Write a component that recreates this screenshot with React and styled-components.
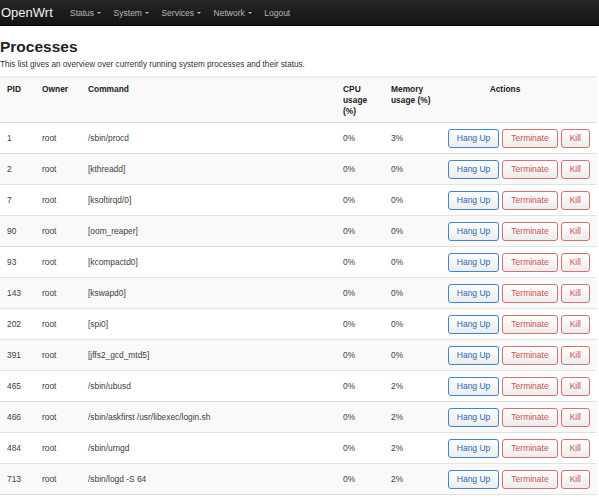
import React from 'react'
import styled, { createGlobalStyle } from 'styled-components'

const processes = [
  { pid: 1, owner: 'root', command: '/sbin/procd', cpu: '0%', mem: '3%' },
  { pid: 2, owner: 'root', command: '[kthreadd]', cpu: '0%', mem: '0%' },
  { pid: 7, owner: 'root', command: '[ksoftirqd/0]', cpu: '0%', mem: '0%' },
  { pid: 90, owner: 'root', command: '[oom_reaper]', cpu: '0%', mem: '0%' },
  { pid: 93, owner: 'root', command: '[kcompactd0]', cpu: '0%', mem: '0%' },
  { pid: 143, owner: 'root', command: '[kswapd0]', cpu: '0%', mem: '0%' },
  { pid: 202, owner: 'root', command: '[spi0]', cpu: '0%', mem: '0%' },
  { pid: 391, owner: 'root', command: '[jffs2_gcd_mtd5]', cpu: '0%', mem: '0%' },
  { pid: 465, owner: 'root', command: '/sbin/ubusd', cpu: '0%', mem: '2%' },
  { pid: 466, owner: 'root', command: '/sbin/askfirst /usr/libexec/login.sh', cpu: '0%', mem: '2%' },
  { pid: 484, owner: 'root', command: '/sbin/urngd', cpu: '0%', mem: '2%' },
  { pid: 713, owner: 'root', command: '/sbin/logd -S 64', cpu: '0%', mem: '2%' },
]

const menu = [
  { label: 'Status', dropdown: true },
  { label: 'System', dropdown: true },
  { label: 'Services', dropdown: true },
  { label: 'Network', dropdown: true },
  { label: 'Logout' },
]

function App() {
  return (
    <>
      <GlobalStyle />
      <Navbar>
        <Brand>OpenWrt</Brand>
        <Menu>
          {menu.map(item => (
            <MenuItem key={item.label}>
              {item.label}
              {item.dropdown && <Caret />}
            </MenuItem>
          ))}
        </Menu>
      </Navbar>
      <Main>
        <Title>Processes</Title>
        <Description>
          This list gives an overview over currently running system processes and their status.
        </Description>
        <Table>
          <colgroup>
            <col style={{ width: 35 }} />
            <col style={{ width: 46 }} />
            <col style={{ width: 255 }} />
            <col style={{ width: 48 }} />
            <col style={{ width: 56 }} />
            <col />
          </colgroup>
          <thead>
            <tr>
              <Th>PID</Th>
              <Th>Owner</Th>
              <Th>Command</Th>
              <Th>CPU usage (%)</Th>
              <Th>Memory usage (%)</Th>
              <ActionsTh>Actions</ActionsTh>
            </tr>
          </thead>
          <tbody>
            {processes.map((p, i) => (
              <Row key={p.pid} $striped={i % 2 === 1}>
                <Td>{p.pid}</Td>
                <Td>{p.owner}</Td>
                <Td>{p.command}</Td>
                <Td>{p.cpu}</Td>
                <Td>{p.mem}</Td>
                <ActionsTd>
                  <Buttons>
                    <Button $variant="blue">Hang Up</Button>
                    <Button $variant="red">Terminate</Button>
                    <Button $variant="red">Kill</Button>
                  </Buttons>
                </ActionsTd>
              </Row>
            ))}
          </tbody>
        </Table>
      </Main>
    </>
  )
}

export default App

const GlobalStyle = createGlobalStyle`
body {
    margin: 0;
    background: #fff;
    font-family: "Liberation Sans", Arial, sans-serif;
    color: #404040;
}
`

const Navbar = styled.header`
height: 25px;
display: flex;
align-items: center;
background: linear-gradient(#262626, #141414);
border-bottom: 1px solid #000;
`

const Brand = styled.div`
font-size: 13px;
color: #f2f2f2;
padding-left: 1px;
width: 69px;
`

const Menu = styled.nav`
display: flex;
gap: 12.5px;
`

const MenuItem = styled.a`
font-size: 8.5px;
color: #b8b8b8;
display: flex;
align-items: center;
cursor: pointer;
`

const Caret = styled.span`
display: inline-block;
margin-left: 3px;
margin-top: 1px;
border-left: 2.5px solid transparent;
border-right: 2.5px solid transparent;
border-top: 2.5px solid #b8b8b8;
`

const Main = styled.main`
padding-top: 11px;
`

const Title = styled.h2`
margin: 0;
font-size: 15.5px;
font-weight: bold;
color: #222;
line-height: 20px;
`

const Description = styled.p`
margin: 2px 0 0;
font-size: 8.2px;
color: #333;
line-height: 12px;
`

const Table = styled.table`
margin-top: 5px;
width: 597px;
table-layout: fixed;
border-collapse: collapse;
border-top: 2px solid #ececec;
font-size: 8.4px;
`

const Th = styled.th`
text-align: left;
vertical-align: top;
font-weight: bold;
color: #222;
background: #f9f9f9;
padding: 6px 7px 0;
height: 38px;
line-height: 11px;
border-bottom: 1px solid #ddd;
`

const ActionsTh = styled(Th)`
text-align: center;
padding-right: 34px;
`

const Row = styled.tr`
background: ${props => (props.$striped ? '#f9f9f9' : '#fff')};
`

const Td = styled.td`
padding: 0 7px;
height: 30px;
vertical-align: middle;
border-bottom: 1px solid #e2e2e2;
color: #404040;
white-space: nowrap;
`

const ActionsTd = styled(Td)`
padding-right: 7px;
`

const Buttons = styled.div`
display: flex;
justify-content: flex-end;
gap: 3px;
`

const Button = styled.button`
font-family: inherit;
font-size: 8.5px;
height: 19px;
padding: 0 8px;
border-radius: 3px;
cursor: pointer;
background: linear-gradient(#ffffff, #ececec);
border: 1px solid ${props => (props.$variant === 'blue' ? '#3b86d4' : '#d47070')};
color: ${props => (props.$variant === 'blue' ? '#1e68b8' : '#d0504c')};
`
